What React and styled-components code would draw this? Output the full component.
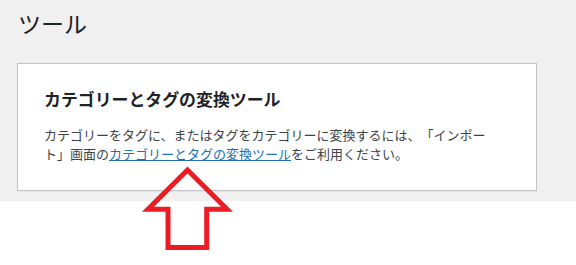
import styled, { createGlobalStyle } from 'styled-components';

const GlobalStyle = createGlobalStyle`
  html, body {
    margin: 0;
    padding: 0;
    background: #fff;
  }
  body {
    font-family: "Noto Sans CJK JP", "Noto Sans", sans-serif;
    font-size: 13px;
    line-height: 1.4em;
    color: #3c434a;
    text-spacing-trim: space-all;
  }
`;

const Page = styled.div`
  position: relative;
  width: 576px;
  height: 265px;
  overflow: hidden;
`;

const Wrap = styled.div`
  background: #f0f0f1;
  padding: 0 0 10px 17px;
`;

const PageTitle = styled.h1`
  margin: 0;
  padding: 9px 0 4px 1px;
  font-size: 23px;
  font-weight: 400;
  line-height: 1.3;
  color: #1d2327;
`;

const Card = styled.div`
  box-sizing: border-box;
  width: 520px;
  margin-top: 20px;
  padding: 0.7em 2em 1em;
  background: #fff;
  border: 1px solid #c3c4c7;
  box-shadow: 0 1px 1px rgba(0, 0, 0, 0.04);
`;

const CardTitle = styled.h2`
  margin: 1em 0;
  font-size: 1.3em;
  font-weight: 600;
  color: #1d2327;
`;

const Description = styled.p`
  max-width: 448px;
  margin: 1em 0;
  font-size: 13px;
  line-height: 1.5;
`;

const Link = styled.a`
  color: #2271b1;
  text-decoration: underline;
`;

// 注釈の矢印（ページの上に重なる）
const Annotation = styled.svg`
  position: absolute;
  top: 0;
  left: 0;
  pointer-events: none;
`;

function App() {
  return (
    <Page>
      <GlobalStyle />
      <Wrap>
        <PageTitle>ツール</PageTitle>
        <Card>
          <CardTitle>カテゴリーとタグの変換ツール</CardTitle>
          <Description>
            カテゴリーをタグに、またはタグをカテゴリーに変換するには、「インポート」画面の
            <Link href="#">カテゴリーとタグの変換ツール</Link>
            をご利用ください。
          </Description>
        </Card>
      </Wrap>
      <Annotation width="576" height="265" viewBox="0 0 576 265">
        <path
          d="M187.5 170 L148 209.2 L168 209.2 L168 247.5 L206.7 247.5 L206.7 209.2 L227 209.2 Z"
          fill="none"
          stroke="#ed1c24"
          strokeWidth="5"
          strokeLinejoin="miter"
        />
      </Annotation>
    </Page>
  );
}

export default App;
